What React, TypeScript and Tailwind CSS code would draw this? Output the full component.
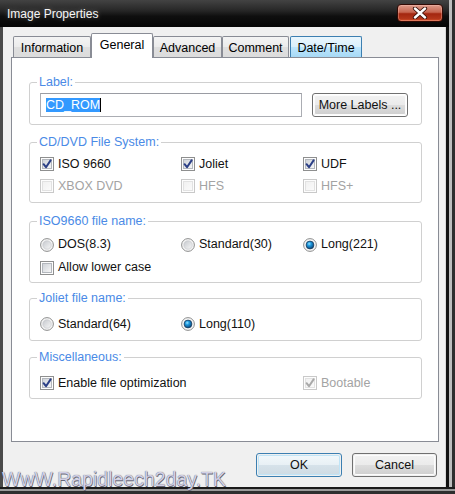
import React from "react";

type BoxProps = { checked?: boolean; disabled?: boolean };

function CheckBox({ checked, disabled }: BoxProps) {
  const outer = disabled ? "#c9c9c9" : "#8e8f8f";
  const inner = disabled ? "#e2e2e2" : "#b3b7bd";
  const id = disabled ? "cbgd" : "cbg";
  return (
    <svg width="14" height="14" viewBox="0 0 14 14" className="shrink-0">
      <defs>
        <linearGradient id={id} x1="0" y1="0" x2="1" y2="1">
          <stop offset="0" stopColor={disabled ? "#f0f0f0" : "#cdd1d7"} />
          <stop offset="1" stopColor={disabled ? "#fbfbfb" : "#f8f8f8"} />
        </linearGradient>
      </defs>
      <rect x="0.5" y="0.5" width="13" height="13" fill="#fdfdfd" stroke={outer} />
      <rect x="2.5" y="2.5" width="9" height="9" fill={`url(#${id})`} stroke={inner} />
      {checked && (
        <path
          d="M3.6 7.2 L6 10.2 L10.6 3.4"
          fill="none"
          stroke={disabled ? "#a9a9a9" : "#2b3f86"}
          strokeWidth="2"
          strokeLinecap="round"
          strokeLinejoin="round"
        />
      )}
    </svg>
  );
}

function Radio({ checked }: { checked?: boolean }) {
  return (
    <svg width="14" height="14" viewBox="0 0 14 14" className="shrink-0">
      <defs>
        <linearGradient id="rbg" x1="0" y1="0" x2="1" y2="1">
          <stop offset="0" stopColor="#c6c9ce" />
          <stop offset="1" stopColor="#f7f7f7" />
        </linearGradient>
        <radialGradient id="rsel" cx="0.4" cy="0.35" r="0.7">
          <stop offset="0" stopColor="#9ae4ff" />
          <stop offset="0.35" stopColor="#1e9ae0" />
          <stop offset="1" stopColor="#063c6e" />
        </radialGradient>
      </defs>
      <circle cx="7" cy="7" r="6.4" fill="#f4f4f4" stroke="#8e8f8f" />
      {checked ? (
        <circle cx="7" cy="7" r="3.9" fill="url(#rsel)" stroke="#1d3e5e" strokeWidth="0.8" />
      ) : (
        <circle cx="7" cy="7" r="4.2" fill="url(#rbg)" stroke="#c2c5ca" strokeWidth="0.6" />
      )}
    </svg>
  );
}

function CheckItem({ label, checked, disabled }: { label: string; checked?: boolean; disabled?: boolean }) {
  return (
    <div className="flex items-center gap-[4px]">
      <CheckBox checked={checked} disabled={disabled} />
      <span className={disabled ? "text-[#a3a3a3]" : "text-[#111]"}>{label}</span>
    </div>
  );
}

function RadioItem({ label, checked }: { label: string; checked?: boolean }) {
  return (
    <div className="flex items-center gap-[4px]">
      <Radio checked={checked} />
      <span className="text-[#111]">{label}</span>
    </div>
  );
}

function Legend({ children }: { children: React.ReactNode }) {
  return (
    <legend className="ml-[-3px] px-[2px] leading-[16px] text-[#4a8ae6]">{children}</legend>
  );
}

function Tab({ label, kind }: { label: string; kind: "normal" | "selected" | "hover"; }) {
  if (kind === "selected") {
    return (
      <div className="relative z-10 -mb-px h-[25px] w-[62px] rounded-t-[2px] border border-b-0 border-[#898c95] bg-white pt-[3px] text-center leading-[16px]">
        {label}
      </div>
    );
  }
  if (kind === "hover") {
    return (
      <div className="ml-px h-[21px] w-[72px] rounded-t-[2px] border border-b-0 border-[#3c7fb1] bg-[linear-gradient(180deg,#eaf6fd_0%,#d9f0fc_50%,#bee6fd_51%,#a7d9f5_100%)] pt-[3px] text-center leading-[16px]">
        {label}
      </div>
    );
  }
  return null;
}

function PlainTab({ label, w }: { label: string; w: string }) {
  return (
    <div
      className={`${w} h-[21px] rounded-t-[2px] border border-b-0 border-[#898c95] bg-[linear-gradient(180deg,#f4f4f4_0%,#ebebeb_50%,#dfdfdf_51%,#dcdcdc_100%)] pt-[3px] text-center leading-[16px]`}
    >
      {label}
    </div>
  );
}

function DlgButton({ label, def, w }: { label: string; def?: boolean; w: string }) {
  return (
    <div
      className={`${w} h-[24px] rounded-[3px] border ${
        def ? "border-[#3c7fb1]" : "border-[#707070]"
      } p-px`}
    >
      <div
        className={`flex h-full w-full items-center justify-center rounded-[2px] ${
          def
            ? "bg-[linear-gradient(180deg,#f2f8fb_0%,#e8f0f5_50%,#d6e2ea_51%,#cfdbe3_100%)] shadow-[inset_0_0_0_1px_#bfe4f7]"
            : "bg-[linear-gradient(180deg,#f2f2f2_0%,#ebebeb_50%,#dddddd_51%,#cfcfcf_100%)] shadow-[inset_0_0_0_1px_#fcfcfc]"
        } text-[#111]`}
      >
        {label}
      </div>
    </div>
  );
}

export default function App() {
  return (
    <div className="relative flex h-[494px] w-[455px] flex-col overflow-hidden bg-[#2a2a2a] font-['Liberation_Sans',Arial,sans-serif] text-[12.5px] text-black">
      <div className="flex h-[487px]">
        {/* window */}
        <div className="flex w-[449px] flex-col">
          {/* title bar */}
          <div className="flex h-[27px] items-start justify-between bg-[linear-gradient(180deg,#434343_0%,#262626_40%,#0f0f0f_60%,#050505_100%)] pl-[7px] pr-[6px]">
            <span className="mt-[6px] text-[12px] leading-[16px] text-[#f6f6f6] [text-shadow:0_0_5px_rgba(255,255,255,0.35)]">
              Image Properties
            </span>
            <div className="mt-[4px] flex h-[18px] w-[46px] items-center justify-center rounded-[4px] border border-[#320a04] bg-[linear-gradient(180deg,#dc9a8a_0%,#c76650_45%,#a3260f_55%,#b3361a_85%,#d4502a_100%)] shadow-[inset_0_0_0_1px_rgba(255,200,190,0.35)]">
              <svg width="16" height="12" viewBox="0 0 16 12">
                <path d="M3 1.5 L13 10.5 M13 1.5 L3 10.5" stroke="#3a1008" strokeWidth="4.2" strokeLinecap="round" />
                <path d="M3 1.5 L13 10.5 M13 1.5 L3 10.5" stroke="#ffffff" strokeWidth="2.4" strokeLinecap="round" />
              </svg>
            </div>
          </div>
          {/* body */}
          <div className="flex flex-1 bg-[#4a4a4a] pl-[3px]">
            <div className="flex flex-1 border-r-[3px] border-[#111]">
              <div className="flex flex-1 flex-col border-r border-[#d8d8d8] bg-[#f0f0f0] pl-[8px] pr-[6px] pt-[6px]">
                {/* tabs */}
                <div className="ml-[2px] flex h-[24px] items-end">
                  <PlainTab label="Information" w="w-[78px]" />
                  <Tab label="General" kind="selected" />
                  <PlainTab label="Advanced" w="w-[69px]" />
                  <PlainTab label="Comment" w="w-[67px]" />
                  <Tab label="Date/Time" kind="hover" />
                </div>
                {/* panel */}
                <div className="h-[385px] w-[428px] border border-[#898c95] bg-white pl-[17px] pr-[16px] pt-[16px]">
                  <fieldset className="rounded-[3px] border border-[#d0d0d0] pb-[7px] pl-[10px] pr-[13px] pt-[3px]">
                    <Legend>Label:</Legend>
                    <div className="flex items-center">
                      <div className="flex h-[24px] w-[262px] items-center border border-[#abadb3] border-t-[#9a9ca3] bg-white pl-[5px]">
                        <span className="bg-[#3399ff] leading-[14px] text-white">CD_ROM</span>
                        <span className="h-[14px] w-px bg-black" />
                      </div>
                      <DlgButton label="More Labels ..." w="ml-[10px] w-[96px]" />
                    </div>
                  </fieldset>

                  <fieldset className="mt-[9px] rounded-[3px] border border-[#d0d0d0] pb-[5px] pl-[10px] pt-[3px]">
                    <Legend>CD/DVD File System:</Legend>
                    <div className="grid grid-cols-[141px_122px_1fr] auto-rows-[22px] items-center">
                      <CheckItem label="ISO 9660" checked />
                      <CheckItem label="Joliet" checked />
                      <CheckItem label="UDF" checked />
                      <CheckItem label="XBOX DVD" disabled />
                      <CheckItem label="HFS" disabled />
                      <CheckItem label="HFS+" disabled />
                    </div>
                  </fieldset>

                  <fieldset className="mt-[10px] rounded-[3px] border border-[#d0d0d0] pb-[3px] pl-[10px] pt-[4px]">
                    <Legend>ISO9660 file name:</Legend>
                    <div className="grid grid-cols-[141px_122px_1fr] auto-rows-[23px] items-center">
                      <RadioItem label="DOS(8.3)" />
                      <RadioItem label="Standard(30)" />
                      <RadioItem label="Long(221)" checked />
                      <CheckItem label="Allow lower case" />
                    </div>
                  </fieldset>

                  <fieldset className="mt-[7px] rounded-[3px] border border-[#d0d0d0] pb-[5px] pl-[10px] pt-[7px]">
                    <Legend>Joliet file name:</Legend>
                    <div className="grid grid-cols-[141px_122px_1fr] auto-rows-[22px] items-center">
                      <RadioItem label="Standard(64)" />
                      <RadioItem label="Long(110)" checked />
                    </div>
                  </fieldset>

                  <fieldset className="mt-[8px] rounded-[3px] border border-[#d0d0d0] pb-[4px] pl-[10px] pt-[7px]">
                    <Legend>Miscellaneous:</Legend>
                    <div className="grid grid-cols-[263px_1fr] auto-rows-[22px] items-center">
                      <CheckItem label="Enable file optimization" checked />
                      <CheckItem label="Bootable" checked disabled />
                    </div>
                  </fieldset>
                </div>
                {/* buttons */}
                <div className="mr-[2px] mt-[11px] flex justify-end gap-[10px]">
                  <DlgButton label="OK" def w="w-[86px]" />
                  <DlgButton label="Cancel" w="w-[85px]" />
                </div>
              </div>
            </div>
          </div>
        </div>
        {/* right shadow strip */}
        <div className="flex flex-1">
          <div className="w-[3px] bg-[#bdbdbd]" />
          <div className="flex-1 bg-[#2e2e2e]" />
        </div>
      </div>
      {/* bottom frame */}
      <div className="flex flex-1 flex-col">
        <div className="h-[2px] bg-[#1a1a1a]" />
        <div className="h-[2px] bg-[#9a9a9a]" />
        <div className="flex-1 bg-[#2e2e2e]" />
      </div>
      {/* watermark */}
      <div className="absolute left-[2px] top-[469px] text-[19.5px] leading-[20px] text-[#d2d0e6] [text-shadow:0_0_1px_#4a4a58,0.5px_0.5px_0_#6a6a78]">
        WwW.Rapidleech2day.TK
      </div>
    </div>
  );
}
